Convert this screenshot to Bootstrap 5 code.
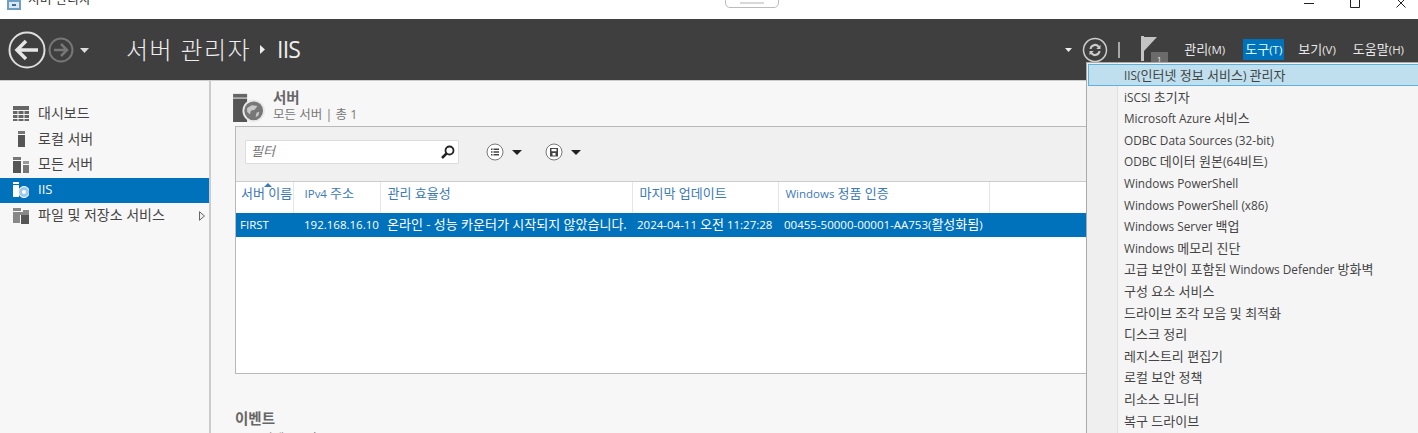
<!DOCTYPE html>
<html lang="ko">
<head>
  <meta charset="UTF-8">
  <title>서버 관리자</title>
  <link href="https://cdn.jsdelivr.net/npm/bootstrap@5.3.3/dist/css/bootstrap.min.css" rel="stylesheet">
  <style>
    html, body { height: 433px; overflow: hidden; }
    body { font-family: "Open Sans", "Noto Sans CJK KR", sans-serif; font-size: 11.5px; color: #444; background: #f7f7f7; position: relative; }
    .ko-run { font-size: 13px; }
    .win-title { height: 19px; background: #fff; overflow: hidden; font-size: 12.5px; color: #333; padding-left: 7px; position: relative; }
    .win-title-text { margin-top: -9px; margin-left: 7px; letter-spacing: .4px; }
    .win-icon { margin-top: -4px; }
    .win-btns { margin-left: auto; gap: 34px; padding-right: 11px; }
    .snip-tab { position: absolute; left: 725px; top: -8px; width: 54px; height: 16px; border: 1px solid #bbb; border-radius: 5px; background: #fff; }
    .snip-tab::after { content: ""; position: absolute; left: 14px; right: 14px; top: 9px; border-top: 2px solid #d8d8d8; }
    .top-bar { height: 61px; background: #3f3f3f; color: #eee; padding-left: 8px; }
    .crumb { font-size: 24px; margin-left: 26px; letter-spacing: 1.4px; color: #eee; line-height: 1; font-weight: 300; }
    .crumb-sep { margin: 0 12px 0 9px; }
    .crumb-leaf { letter-spacing: -.8px; font-weight: 400; font-size: 23px; }
    .top-menu { color: #e8e8e8; padding: 1px 2px; font-size: 11.5px; }
    .top-menu-on { background: #0072bc; color: #dff; }
    .top-right { margin-left: auto; padding-right: 12px; }
    .caret-gap { margin-right: 10px; }
    .sep-gap { margin-left: 10px; }
    .flag-icon { margin: 0 13px 0 21px; }
    .body-row { height: 353px; border-top: 1px solid #ccc; }
    .side-nav { width: 209px; padding-top: 20px; flex: none; }
    .side-item { height: 25.5px; padding-left: 13px; gap: 9px; font-size: 14px; color: #444; }
    .side-item > span { margin-top: -2px; }
    .side-on { background: #0072bc; color: #fff; font-size: 13px; }
    .side-arrow { margin-left: auto; margin-right: 4px; }
    .side-divider { width: 2px; background: #ccc; flex: none; }
    .main-pane { flex: 1; padding-left: 24px; min-width: 0; }
    .sec-head { height: 45px; padding-top: 8px; gap: 8px; margin-left: -2px; }
    .sec-icon { margin-top: 3px; }
    .sec-title { font-size: 14.5px; font-weight: 700; color: #666; line-height: 17px; }
    .sec-sub { font-size: 12.5px; color: #777; line-height: 17px; }
    .srv-panel { height: 248px; border: 1px solid #b9b9b9; background: #fff; width: 1200px; }
    .srv-tools { height: 55px; background: #f0f0f0; border-bottom: 1px solid #ccc; padding: 13px 0 0 9px; }
    .filter-box { width: 214px; height: 24px; background: #fff; border: 1px solid #ddd; padding: 0 3px 0 5px; font-style: italic; color: #777; font-size: 13px; }
    .tool-btn { gap: 8px; height: 24px; }
    .srv-table { table-layout: fixed; width: 100%; margin: 0; }
    .srv-table th { height: 31px; font-weight: 400; color: #3d79b5; padding: 0 0 10px 7px; border-right: 1px solid #e6e6e6; background: #fff; white-space: nowrap; position: relative; }
    .srv-table th:first-child { padding-left: 5px; }
    .srv-table th:nth-child(2) { padding-left: 11px; }
    .srv-table th:last-child { border-right: 0; }
    .srv-table td { height: 24px; background: #0072bc; color: #fff; padding: 0 0 0 6px; white-space: nowrap; vertical-align: middle; }
    .srv-table td:first-child { padding-left: 4px; }
    .srv-table td:nth-child(2) { padding-left: 11px; }
    .srv-table td:nth-child(3) { padding-left: 7px; }
    .srv-table td:nth-child(4) { padding-left: 5px; }
    .sort-mark { position: absolute; left: 28px; top: 1px; border: 4px solid transparent; border-top: 0; border-bottom: 4px solid #3d79b5; }
    .evt-head { margin-top: 37px; }
    .evt-title { font-size: 14.5px; font-weight: 700; color: #666; line-height: 16px; margin-bottom: 3px; }
    .tools-menu { position: absolute; left: 1086px; top: 62px; width: 340px; height: 371px; background: #f5f5f5; border-left: 1px solid #aaa; border-top: 1px solid #aaa; padding: 1px 0 0 1px; color: #444; font-size: 11.8px; }
    .tools-gutter { position: absolute; left: 0; top: 0; bottom: 0; width: 31px; background: #efefef; border-right: 1px solid #e2e2e2; }
    .tools-item { height: 21.6px; line-height: 22.600px; padding-left: 36px; position: relative; white-space: nowrap; }
    .tools-on { background: #bfdfee; outline: 1px solid #5cb2dd; outline-offset: -1px; }
  </style>
</head>
<body>

  <div class="win-title d-flex align-items-start">
    <svg width="14" height="14" viewBox="0 0 14 14" class="win-icon"><path d="M0 4 7 0l7 3v11H0z" fill="#6d9fc4"/><path d="M2 6h10v6H2z" fill="#dbe7f0"/><path d="M5 8h4v2H5z" fill="#3d6f9a"/></svg>
    <div class="win-title-text">서버 관리자</div>
    <div class="win-btns d-flex">
      <svg width="12" height="8" viewBox="0 0 12 8"><path d="M1 3.500h10" stroke="#222" fill="none"/></svg>
      <svg width="12" height="8" viewBox="0 0 12 8"><path d="M1.500 -2v9.500h9v-9.500" stroke="#222" fill="none"/></svg>
      <svg width="12" height="8" viewBox="0 0 12 8"><path d="M1 -2 10.500 7.500M11 -2 1.500 7.500" stroke="#222" fill="none"/></svg>
    </div>
    <div class="snip-tab"></div>
  </div>

  <div class="top-bar d-flex align-items-center">
    <svg width="92" height="40" viewBox="0 0 92 40">
      <circle cx="19" cy="20" r="17.500" fill="none" stroke="#ddd" stroke-width="2"/>
      <path d="M30 20H10M18 11l-9 9 9 9" fill="none" stroke="#e6e6e6" stroke-width="3.500"/>
      <circle cx="53" cy="20" r="11.500" fill="none" stroke="#777" stroke-width="2"/>
      <path d="M46 20h13M53 14l6 6-6 6" fill="none" stroke="#777" stroke-width="2.500"/>
      <path d="M72 18h9l-4.500 5z" fill="#ddd"/>
    </svg>
    <div class="crumb d-flex align-items-center">
      <span>서버 관리자</span>
      <svg class="crumb-sep" width="5" height="9" viewBox="0 0 5 9"><path d="M0 0l5 4.500-5 4.500z" fill="#eee"/></svg>
      <span class="crumb-leaf">IIS</span>
    </div>
    <div class="top-right d-flex align-items-center">
      <svg width="7" height="4" viewBox="0 0 7 4" class="caret-gap"><path d="M0 0h7L3.500 4z" fill="#eee"/></svg>
      <svg width="26" height="26" viewBox="0 0 26 26">
        <circle cx="13" cy="13" r="11.500" fill="none" stroke="#ccc" stroke-width="1.500"/>
        <path d="M7.500 12a5.500 5.500 0 0 1 9.800-3l1.200-1.300V12h-4.300l1.600-1.600a3.600 3.600 0 0 0-6.300 1.600zM18.500 14a5.500 5.500 0 0 1-9.800 3l-1.200 1.300V14h4.300l-1.600 1.600a3.600 3.600 0 0 0 6.300-1.600z" fill="#ccc"/>
      </svg>
      <svg width="2" height="16" viewBox="0 0 2 16" class="sep-gap"><path d="M1 0v16" stroke="#ccc" stroke-width="1.500"/></svg>
      <svg width="28" height="28" viewBox="0 0 28 28" class="flag-icon">
        <path d="M0 0h3v25H0zM3 1h13L3 15z" fill="#c4c4c4"/>
        <path d="M10 16h17v12H10z" fill="#6b6b6b"/>
        <text x="16" y="25.500" font-size="8" fill="#eee">1</text>
      </svg>
      <span class="top-menu"><span class="ko-run">관리</span>(M)</span>
      <span class="top-menu top-menu-on ms-3"><span class="ko-run">도구</span>(T)</span>
      <span class="top-menu" style="margin-left:12px"><span class="ko-run">보기</span>(V)</span>
      <span class="top-menu" style="margin-left:13px"><span class="ko-run">도움말</span>(H)</span>
    </div>
  </div>

  <div class="body-row d-flex">
    <div class="side-nav">
      <div class="side-item d-flex align-items-center">
        <svg width="16" height="16" viewBox="0 0 16 16"><path d="M0 0h16v4H0zM0 5h4.500v3H0zM5.500 5h5v3h-5zM11.500 5H16v3h-4.500zM0 9h4.500v3H0zM5.500 9h5v3h-5zM11.500 9H16v3h-4.500zM0 13h4.500v2H0zM5.500 13h5v2h-5zM11.500 13H16v2h-4.500z" fill="#666"/></svg>
        <span>대시보드</span>
      </div>
      <div class="side-item d-flex align-items-center">
        <svg width="16" height="16" viewBox="0 0 16 16"><path d="M5 0h7v3H5z" fill="#777"/><path d="M5 4h7v12H5z" fill="#555"/></svg>
        <span>로컬 서버</span>
      </div>
      <div class="side-item d-flex align-items-center">
        <svg width="16" height="16" viewBox="0 0 16 16"><path d="M0 0h8v3H0z" fill="#777"/><path d="M0 4h8v12H0z" fill="#555"/><path d="M10 4h6v3h-6z" fill="#999"/><path d="M10 8h6v8h-6z" fill="#777"/></svg>
        <span>모든 서버</span>
      </div>
      <div class="side-item side-on d-flex align-items-center">
        <svg width="16" height="16" viewBox="0 0 16 16"><path d="M0 0h6v2H0zM0 3h6v12H0z" fill="#fff"/><circle cx="11" cy="10" r="5.500" fill="#9fcbe8" stroke="#fff"/><circle cx="11" cy="10" r="2" fill="#fff"/></svg>
        <span>IIS</span>
      </div>
      <div class="side-item d-flex align-items-center">
        <svg width="16" height="16" viewBox="0 0 16 16"><path d="M0 0h8v3H0zM10 2h6v2h-6z" fill="#888"/><path d="M0 4h16v3H0zM0 7h7v8H0z" fill="#888"/><path d="M8 7h8v9H8z" fill="#555"/></svg>
        <span>파일 및 저장소 서비스</span>
        <svg class="side-arrow" width="6" height="10" viewBox="0 0 6 10"><path d="M.5.700 5.500 5 .5 9.300z" fill="#eee" stroke="#666"/></svg>
      </div>
    </div>
    <div class="side-divider"></div>
    <div class="main-pane">
      <div class="sec-head d-flex">
        <svg class="sec-icon" width="32" height="30" viewBox="0 0 34 32">
          <path d="M0 2h15v4H0z" fill="#666"/><path d="M0 7h15v25H0z" fill="#555"/>
          <circle cx="22" cy="20" r="11" fill="#777" stroke="#e8e8e8" stroke-width="2"/>
          <path d="M15 17l5-3 6 1-3 4-4 1-1 4-3-3zM25 22l3-1-1 4-3 2z" fill="#c8c8c8"/>
        </svg>
        <div>
          <div class="sec-title">서버</div>
          <div class="sec-sub">모든 서버 | 총 1</div>
        </div>
      </div>
      <div class="srv-panel">
        <div class="srv-tools d-flex align-items-start">
          <div class="filter-box d-flex align-items-center justify-content-between">
            <span>필터</span>
            <svg width="14" height="14" viewBox="0 0 14 14"><circle cx="8.500" cy="5.500" r="4" fill="none" stroke="#222" stroke-width="1.800"/><path d="M5.500 8.500 1 13" stroke="#222" stroke-width="2.500"/></svg>
          </div>
          <div class="tool-btn d-flex align-items-center" style="margin-left:27px">
            <svg width="18" height="18" viewBox="0 0 18 18"><circle cx="9" cy="9" r="8" fill="#fff" stroke="#777"/><path d="M5 5.500h1.500v1.500H5zM5 8.300h1.500v1.500H5zM5 11h1.500v1.500H5zM7.500 5.500H13v1.500H7.500zM7.500 8.300H13v1.500H7.500zM7.500 11H13v1.500H7.500z" fill="#444"/></svg>
            <svg width="10" height="5" viewBox="0 0 10 5"><path d="M0 0h10L5 5z" fill="#222"/></svg>
          </div>
          <div class="tool-btn d-flex align-items-center" style="margin-left:23px">
            <svg width="18" height="18" viewBox="0 0 18 18"><circle cx="9" cy="9" r="8" fill="#fff" stroke="#777"/><path d="M5 5h8v8.500H5z" fill="#444"/><path d="M6.500 6h5v2.200h-5zM7.500 10h3v2.500h-3z" fill="#fff"/></svg>
            <svg width="10" height="5" viewBox="0 0 10 5"><path d="M0 0h10L5 5z" fill="#222"/></svg>
          </div>
        </div>
        <table class="table table-borderless srv-table">
          <colgroup><col style="width:57px"><col style="width:87px"><col style="width:252px"><col style="width:146px"><col style="width:211px"><col></colgroup>
          <thead>
            <tr>
              <th><span class="sort-mark"></span><span class="ko-run">서버 이름</span></th>
              <th>IPv4 <span class="ko-run">주소</span></th>
              <th><span class="ko-run">관리 효율성</span></th>
              <th><span class="ko-run">마지막 업데이트</span></th>
              <th>Windows <span class="ko-run">정품 인증</span></th>
              <th></th>
            </tr>
          </thead>
          <tbody>
            <tr>
              <td>FIRST</td>
              <td>192.168.16.10</td>
              <td><span class="ko-run">온라인 - 성능 카운터가 시작되지 않았습니다.</span></td>
              <td>2024-04-11 <span class="ko-run">오전</span> 11:27:28</td>
              <td>00455-50000-00001-AA753(<span class="ko-run">활성화됨</span>)</td>
              <td></td>
            </tr>
          </tbody>
        </table>
      </div>
      <div class="evt-head">
        <div class="evt-title">이벤트</div>
        <div class="sec-sub">모든 이벤트 | 총 0</div>
      </div>
    </div>
  </div>

  <div class="tools-menu">
    <div class="tools-gutter"></div>
    <div class="tools-item tools-on">IIS(<span class="ko-run">인터넷 정보 서비스</span>) <span class="ko-run">관리자</span></div>
    <div class="tools-item">iSCSI <span class="ko-run">초기자</span></div>
    <div class="tools-item">Microsoft Azure <span class="ko-run">서비스</span></div>
    <div class="tools-item">ODBC Data Sources (32-bit)</div>
    <div class="tools-item">ODBC <span class="ko-run">데이터 원본</span>(64<span class="ko-run">비트</span>)</div>
    <div class="tools-item">Windows PowerShell</div>
    <div class="tools-item">Windows PowerShell (x86)</div>
    <div class="tools-item">Windows Server <span class="ko-run">백업</span></div>
    <div class="tools-item">Windows <span class="ko-run">메모리 진단</span></div>
    <div class="tools-item"><span class="ko-run">고급 보안이 포함된</span> Windows Defender <span class="ko-run">방화벽</span></div>
    <div class="tools-item"><span class="ko-run">구성 요소 서비스</span></div>
    <div class="tools-item"><span class="ko-run">드라이브 조각 모음 및 최적화</span></div>
    <div class="tools-item"><span class="ko-run">디스크 정리</span></div>
    <div class="tools-item"><span class="ko-run">레지스트리 편집기</span></div>
    <div class="tools-item"><span class="ko-run">로컬 보안 정책</span></div>
    <div class="tools-item"><span class="ko-run">리소스 모니터</span></div>
    <div class="tools-item"><span class="ko-run">복구 드라이브</span></div>
  </div>

</body>
</html>
